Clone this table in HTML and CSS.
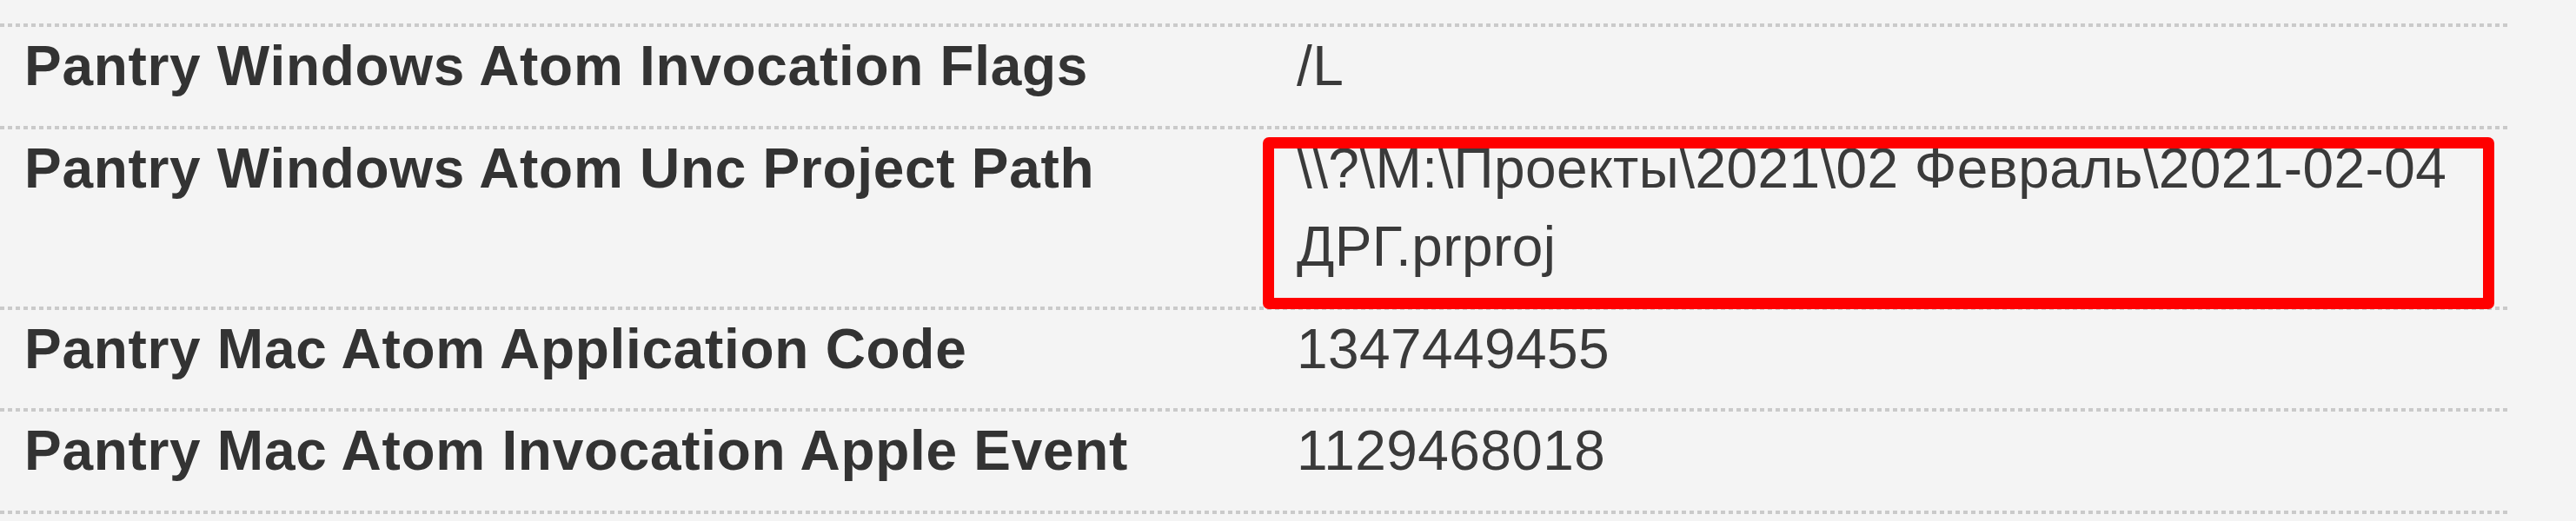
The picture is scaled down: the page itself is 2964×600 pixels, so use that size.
FILE: index.html
```html
<!DOCTYPE html>
<html lang="ru">
<head>
    <meta charset="UTF-8">
    <meta name="viewport" content="width=device-width, initial-scale=1.0">
    <title>Pantry Atom</title>
    <link rel="stylesheet" href="styles.css">
</head>
<body>
    <div class="props">
        <div class="row">
            <div class="name">Pantry Windows Atom Invocation Flags</div>
            <div class="value">/L</div>
        </div>
        <div class="row">
            <div class="name">Pantry Windows Atom Unc Project Path</div>
            <div class="value">\\?\M:\Проекты\2021\02 Февраль\2021-02-04 ДРГ.prproj</div>
        </div>
        <div class="row">
            <div class="name">Pantry Mac Atom Application Code</div>
            <div class="value">1347449455</div>
        </div>
        <div class="row">
            <div class="name">Pantry Mac Atom Invocation Apple Event</div>
            <div class="value">1129468018</div>
        </div>

        <!-- рамка выделения -->
        <div class="mark"></div>
    </div>
</body>
</html>
```

FILE: styles.css
```css
body {
    margin: 0;
    padding: 0;
    background-color: #f4f4f4;
    font-family: "Liberation Sans", Arial, sans-serif;
    color: #353535;
}
.props {
    position: relative;
    width: 2888px;
    margin-top: 27px;
    padding-bottom: 4px;
    background-image: linear-gradient(to right, #cacaca 5px, transparent 5px);
    background-size: 9px 4px;
    background-repeat: repeat-x;
    background-position: left bottom;
}
.row {
    display: grid;
    grid-template-columns: 1464px 1fr;
    padding: 4px 0 23px 28px;
    font-size: 64px;
    line-height: 90.5px;
    background-image: linear-gradient(to right, #cacaca 5px, transparent 5px);
    background-size: 9px 4px;
    background-repeat: repeat-x;
    background-position: left top;
}
.name {
    font-weight: bold;
    letter-spacing: 0.7px;
    color: #333;
}
.value {
    letter-spacing: 0.4px;
    color: #3a3a3a;
}
.mark {
    position: absolute;
    left: 1453px;
    top: 131px;
    width: 1391px;
    height: 172px;
    border: 13px solid #ff0000;
    border-radius: 7px;
}
```
